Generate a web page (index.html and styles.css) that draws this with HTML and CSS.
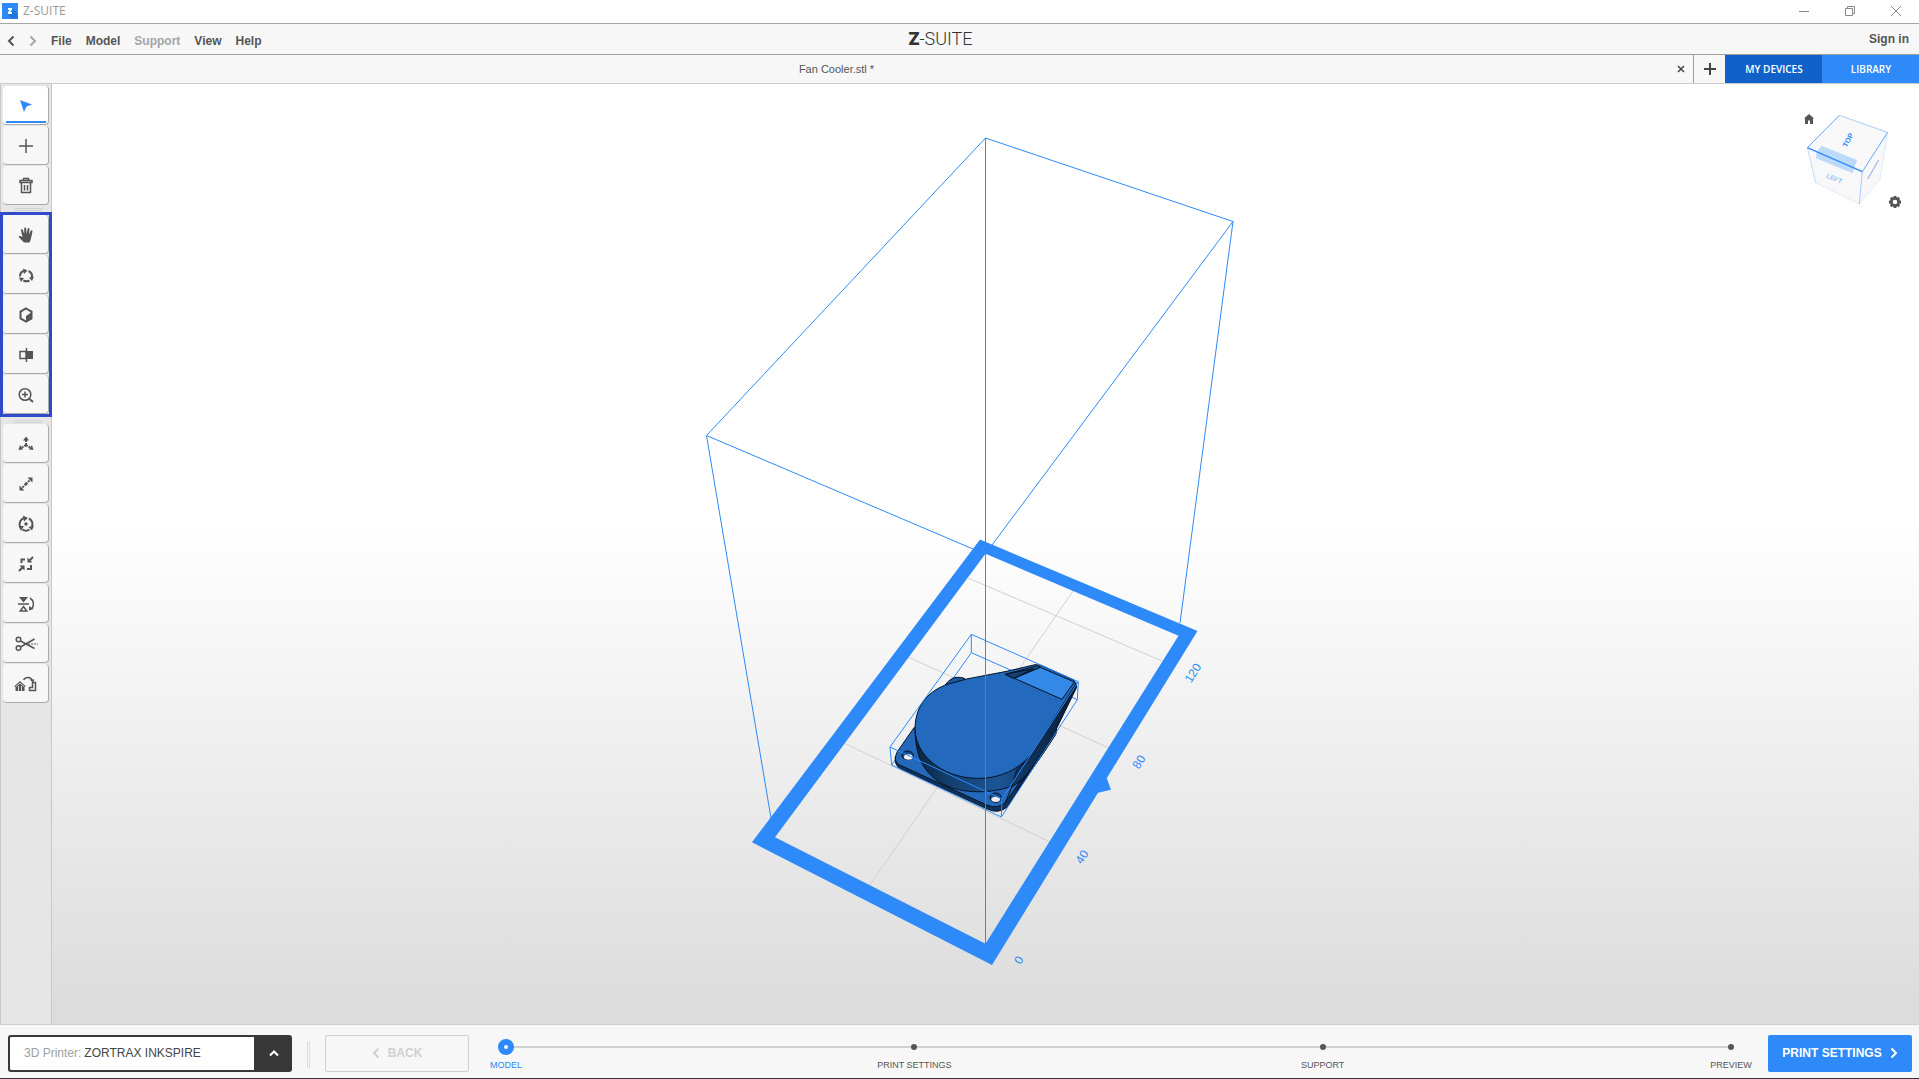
FILE: index.html
```html
<!DOCTYPE html>
<html lang="en">
<head>
<meta charset="utf-8">
<meta name="viewport" content="width=device-width, initial-scale=1">
<title>Z-SUITE</title>
<link rel="stylesheet" href="styles.css">
</head>
<body>
<header class="titlebar">
  <svg class="app-icon" viewBox="0 0 16 16" aria-hidden="true"><rect width="16" height="16" fill="#2d8af8"/><path d="M10 5l6 6v5H9l-3-5z" fill="#2276dc"/><path d="M6 5h4v2L8 9h2v2H6V9l2-2H6z" fill="#fff"/></svg>
  <span class="app-name">Z-SUITE</span>
  <div class="window-controls">
    <button aria-label="Minimize"><svg viewBox="0 0 12 12"><path d="M1 6.500h10"/></svg></button>
    <button aria-label="Restore"><svg viewBox="0 0 12 12"><path d="M1.500 3.500h7v7h-7zM3.500 3.500v-2h7v7h-2"/></svg></button>
    <button aria-label="Close"><svg viewBox="0 0 12 12"><path d="M1 1l10 10M11 1L1 11"/></svg></button>
  </div>
</header>

<nav class="menubar">
  <div class="menu-left">
    <button class="history" aria-label="Undo"><svg viewBox="0 0 8 12"><path d="M6.500 1.500L2 6l4.500 4.500"/></svg></button>
    <button class="history" aria-label="Redo" disabled><svg viewBox="0 0 8 12"><path d="M1.500 1.500L6 6l-4.500 4.500"/></svg></button>
    <div class="menus">
      <button>File</button>
      <button>Model</button>
      <button disabled>Support</button>
      <button>View</button>
      <button>Help</button>
    </div>
  </div>
  <div class="brand"><b>Z</b>-SUITE</div>
  <a class="sign-in" href="#">Sign in</a>
</nav>

<div class="tabs">
  <div class="tab"><span class="tab-name">Fan Cooler.stl *</span><button class="tab-close" aria-label="Close tab"><svg viewBox="0 0 8 8"><path d="M1 1l6 6M7 1L1 7"/></svg></button></div>
  <button class="tab-add" aria-label="New tab"><svg viewBox="0 0 12 12"><path d="M6 0v12M0 6h12"/></svg></button>
  <button class="devices">MY DEVICES</button>
  <button class="library">LIBRARY</button>
</div>

<main class="workspace">
  <aside class="toolbar">
    <div class="tools">
      <button class="active" aria-label="Select"><svg viewBox="0 0 24 24"><path d="M6 6l12 4.500-5.500 2L10 18z" fill="currentColor"/></svg></button>
      <button aria-label="Add"><svg viewBox="0 0 24 24"><path class="line" d="M12 5v14M5 12h14"/></svg></button>
      <button aria-label="Delete"><svg viewBox="0 0 24 24"><path class="line" d="M9.500 6.500v-2h5v2M6 6.500h12v2H6zM7.500 9v9.500h9V9M10.500 11v5.500M13.500 11v5.500"/></svg></button>
    </div>
    <div class="grip"></div>
    <div class="tools highlighted">
      <button aria-label="Pan"><svg viewBox="0 0 24 24"><path fill="currentColor" d="M10 19.500L5.200 14.500c-.8-1-.2-1.800.9-1.500L8.500 14 7 7.500c-.3-1.500 1.500-1.800 1.900-.4L10.200 11V5.500c0-1.500 1.900-1.500 2 0L12.600 11l1-5c.3-1.400 2.100-1.100 1.900.3L15 11.500l1.600-3.500c.7-1.300 2.200-.6 1.800.7L17 15.500c-.5 2-1.500 4-1.500 4z"/></svg></button>
      <button aria-label="Rotate view"><svg viewBox="0 0 24 24"><g class="line heavy"><path d="M6 13.500c0-3 1.500-5 4-5.500M14.500 8c3 1.500 4 4 3.300 6.500M15.500 17.500c-2.500 1.300-4.500.8-6.200 0"/></g><path fill="currentColor" d="M9 5.500l4.500 2-3.500 3.500zM20 13.500l-2 4.500-3-3.500zM5 14.500l5 .5-3 4z"/></svg></button>
      <button aria-label="View mode"><svg viewBox="0 0 24 24"><path d="M12 5.500l5.500 3.200v6.600L12 18.500l-5.500-3.200V8.700z" fill="none" stroke="currentColor" stroke-width="2"/><path fill="currentColor" d="M18 9v7l-6 3v-6z"/></svg></button>
      <button aria-label="Section"><svg viewBox="0 0 24 24"><path class="line" d="M12.500 5v14M6 8.500h6v7H6z"/><path fill="currentColor" d="M12 8h7v8h-7z"/></svg></button>
      <button aria-label="Zoom"><svg viewBox="0 0 24 24"><circle class="line" cx="11" cy="11.500" r="5.800"/><path class="line" d="M11 8.500v6M8 11.500h6"/><path class="line heavy" d="M15.500 16l3.500 3"/></svg></button>
    </div>
    <div class="grip"></div>
    <div class="tools">
      <button aria-label="Move"><svg viewBox="0 0 24 24"><path class="line dashes" d="M12 13V7M12 13l-5 3M12 13l5 3"/><path fill="currentColor" d="M12 4.500l3 4H9zM4.500 18l1.500-5 3 4.500zM19.500 18L18 13l-3 4.500z"/><circle cx="12" cy="13" r="1.500" fill="currentColor"/></svg></button>
      <button aria-label="Scale"><svg viewBox="0 0 24 24"><path class="line dashes" d="M12 12l5-5M12 12l-5 5"/><path fill="currentColor" d="M18.500 5.500v5l-5-5zM5.500 18.500v-5l5 5z"/><circle cx="12" cy="12" r="1.400" fill="currentColor"/></svg></button>
      <button aria-label="Rotate"><svg viewBox="0 0 24 24"><path class="line heavy" d="M6 14a6.300 6.300 0 0 1 4-8M15 6.500a6.300 6.300 0 0 1 3 8M15.500 17.500a6.300 6.300 0 0 1-7 0"/><path fill="currentColor" d="M9 3.500l5 2.500-4 3.500zM20 13.500L18 18.500l-3.500-3.500zM4.500 14h5.500l-3 5z"/><circle cx="12" cy="12" r="1.700" fill="currentColor"/></svg></button>
      <button aria-label="Fit"><svg viewBox="0 0 24 24"><path class="line heavy" d="M7.500 11V7.500H11M17 13v4h-4M19 5l-4 4M5 19l4-4"/><path fill="currentColor" d="M13.500 5.500v5h5zM10.500 18.500v-5h-5z"/></svg></button>
      <button aria-label="Mirror"><svg viewBox="0 0 24 24"><path fill="currentColor" d="M5 5h9l-4.500 5.500z"/><path class="line" d="M4 12h11M9.500 14.500l3.300 4.500H6.200zM16 6c4 2.500 4.500 8 1.500 11"/><path fill="currentColor" d="M15 18.500v-4.500l4.500 3z"/></svg></button>
      <button aria-label="Cut"><svg viewBox="0 0 24 24"><circle class="line" cx="4.500" cy="7.500" r="2.300"/><circle class="line" cx="4.500" cy="16" r="2.300"/><path class="line" d="M6.500 9l14 7.500M6.500 15l14-8"/><path d="M14 12h10" stroke="currentColor" stroke-dasharray="2 1"/></svg></button>
      <button aria-label="Replace"><svg viewBox="0 0 24 24"><path fill="currentColor" d="M6 9l6 5.500h-1.500V19h-9v-4.500H0z"/><path d="M4.500 19v-5M7.500 19v-5M2 14.500l4-3.500 4 3.500" fill="none" stroke="#f7f7f7" stroke-width=".8"/><path class="line" d="M9.500 8c2-3.500 7-3.500 8.500 0M21.500 10.500v8h-6v-3h3v-5z"/><path fill="currentColor" d="M15.500 7.500h5l-1.500 3z"/></svg></button>
    </div>
  </aside>

  <section class="viewport" aria-label="Build platform">
    <svg class="scene" viewBox="52 84 1867 940" preserveAspectRatio="xMidYMid meet">
      <defs>
        <linearGradient id="side" x1="0" x2="1"><stop offset="0" stop-color="#0b2440"/><stop offset=".25" stop-color="#14406f"/><stop offset=".6" stop-color="#1c5596"/><stop offset="1" stop-color="#0c2747"/></linearGradient>
        <linearGradient id="flank" x1="0" y1="1" x2="1" y2="0"><stop offset="0" stop-color="#123a68"/><stop offset="1" stop-color="#091b30"/></linearGradient>
      </defs>
      <path class="grid-line" d="M968 578L1162 661M908 657L1109 748M844 743L1050 842M1073 591L870 885"/>
      <path class="platform" fill-rule="evenodd" d="M980 539.500L1197.500 631L1106.700 778.300L1111 789.700L1098 792.700L992 965L752 842.300ZM985.500 553.700L775 837.300L985.500 943.700L1178.500 635.700Z"/>
      <path class="wire" d="M985.500 138L1233 221.500L1180 623M1233 221.500L992 545M985.500 138L706.500 435.500L771 818M706.500 435.500L973 549"/>
      <g class="model" transform="translate(860 600) scale(.33333)">
        <path class="box-wire" d="M334 158L652 299M334 158L95 495M334 103V158"/>
        <path class="edge" fill="#1b58a0" d="M255 255Q275 230 292 232Q315 232 318 240L290 262z"/>
        <path class="edge" fill="#0f325a" d="M106 470Q103 495 120 506L382 627Q415 643 440 622L588 400L590 370z"/>
        <path class="edge" fill="#2468bb" d="M162 383L112 455Q98 482 117 494L380 615Q415 629 437 606L590 388L480 350z"/>
        <path class="edge" fill="url(#side)" d="M165 385C166 470 190 520 250 553C310 583 395 580 450 560C500 540 520 500 588 388L560 350z"/>
        <path class="edge" fill="url(#flank)" d="M648 248L650 262L590 385L588 400C560 445 545 470 520 500Q490 540 455 562L470 510L510 472z"/>
        <path class="edge" fill="#2369bd" d="M165 385C166 310 213 270 262 253L320 237L440 214L525 194Q540 193 555 201L641 240Q650 247 645 256L515 462C466 519 405 537 345 535C245 531 165 465 165 385z"/>
        <path class="edge" fill="#1b58a0" d="M435 223L532 197L541 201L462 235z"/>
        <path class="edge" fill="#163f72" d="M435 223L520 206L462 235z"/>
        <path class="edge" fill="#3388e8" d="M541 202L643 246L606 298L463 235z"/>
        <path class="edge" fill="none" d="M437 606L455 562M470 570L586 400M445 615L586 405"/>
        <g><ellipse class="edge" cx="143" cy="466" rx="17" ry="13" fill="#174b87"/><ellipse cx="145" cy="471" rx="13" ry="8" fill="#f1f1f1"/></g>
        <g><ellipse class="edge" cx="407" cy="593" rx="17" ry="14" fill="#174b87"/><ellipse cx="407" cy="598" rx="13" ry="8" fill="#eee"/></g>
        <path class="box-wire" d="M334 103L655 245L652 299L424 651L95 495L90 441L334 103M90 441L426 597L655 245M426 597L424 651"/>
      </g>
      <path class="wire" d="M985.500 138V944"/>
      <g class="ruler">
        <text transform="translate(1193 673) rotate(-58)">120</text>
        <text transform="translate(1139 762) rotate(-58)">80</text>
        <text transform="translate(1082 857) rotate(-58)">40</text>
        <text transform="translate(1019 960) rotate(-58)">0</text>
      </g>
    </svg>
    <div class="view-cube">
      <svg class="cube" viewBox="0 0 330 330" aria-label="View cube">
        <path fill="#f8f8f9" d="M118 31L263 82L240 222L178 297L47 233L22 128z"/>
        <path fill="#bcdafc" d="M64 122L171 165L158 205L48 160L50 142z"/>
        <g fill="none" stroke="#2d8af8" stroke-width="3"><path opacity=".75" d="M118 31L22 128M263 82L187 200"/><path opacity=".4" d="M118 31L263 82M187 200L178 297"/><path stroke-width="4" d="M22 128L187 200"/><path opacity=".3" d="M22 128L47 233"/><path opacity=".15" d="M263 82L240 222L178 297L47 233"/></g>
        <path d="M203 222L236 165" stroke="#a3bee0" stroke-width="4"/>
        <text class="cube-top" transform="translate(144 105) rotate(-62)">TOP</text>
        <text class="cube-left" transform="translate(103 220) rotate(22)">LEFT</text>
      </svg>
      <button class="home" aria-label="Home view"><svg viewBox="0 0 12 12"><path fill="#555" d="M6 1l5 4.500h-1V11H7V7.500H5V11H2V5.500H1z"/></svg></button>
      <button class="gear" aria-label="View settings"><svg viewBox="0 0 14 14"><circle cx="7" cy="7" r="3.600" fill="none" stroke="#555" stroke-width="2.600"/><path stroke="#555" stroke-width="2.800" d="M7 1v2M7 11v2M1 7h2M11 7h2M2.800 2.800l1.400 1.400M9.800 9.800l1.400 1.400M11.200 2.800L9.800 4.200M4.200 9.800l-1.400 1.400"/></svg></button>
    </div>
  </section>
</main>

<footer class="statusbar">
  <div class="printer">
    <label for="printer">3D Printer:</label>
    <select id="printer"><option>ZORTRAX INKSPIRE</option></select>
    <svg viewBox="0 0 12 12" aria-hidden="true"><path d="M2 8.500l4-4 4 4"/></svg>
  </div>
  <div class="divider"></div>
  <button class="back" disabled><svg viewBox="0 0 8 12"><path d="M6.500 1.500L2 6l4.500 4.500"/></svg>BACK</button>
  <ol class="steps">
    <li class="current"><span class="dot"></span><span class="step-name">MODEL</span></li>
    <li><span class="dot"></span><span class="step-name">PRINT SETTINGS</span></li>
    <li><span class="dot"></span><span class="step-name">SUPPORT</span></li>
    <li><span class="dot"></span><span class="step-name">PREVIEW</span></li>
  </ol>
  <button class="next">PRINT SETTINGS<svg viewBox="0 0 8 12"><path d="M1.500 1.500L6 6l-4.500 4.500"/></svg></button>
</footer>
</body>
</html>
```
FILE: styles.css
```css
:root {
  --blue: #2d8af8;
  --ink: #555;
  --panel: #f7f7f7;
}

* { box-sizing: border-box; }

body {
  margin: 0;
  min-height: 100vh;
  display: flex;
  flex-direction: column;
  background: var(--panel);
  color: var(--ink);
  font: 12px/16px "Liberation Sans", Arial, sans-serif;
}

button, select {
  margin: 0;
  padding: 0;
  border: 0;
  background: none;
  color: inherit;
  font: inherit;
}

svg { display: block; }

/* Window title */
.titlebar {
  display: flex;
  align-items: center;
  height: 24px;
  padding: 0 0 2px 2px;
  background: #fff;
  border-bottom: 1px solid #a5a5a5;
}
.app-icon { width: 16px; height: 16px; }
.app-name {
  margin-left: 5px;
  color: #999;
  font-family: "Open Sans", "Noto Sans", sans-serif;
}
.window-controls { display: flex; margin-left: auto; }
.window-controls button { width: 46px; height: 20px; display: grid; place-items: center; }
.window-controls svg { width: 12px; height: 12px; fill: none; stroke: #888; }

/* Menus */
.menubar {
  display: grid;
  grid-template-columns: 1fr auto 1fr;
  align-items: center;
  height: 31px;
  padding-top: 3px;
  border-bottom: 1px solid #a0a0a0;
  font-weight: bold;
}
.menu-left { display: flex; align-items: center; padding-left: 7px; }
.menus { display: flex; gap: 14px; margin-left: 14px; }
.menubar button:disabled { color: #a5a5a5; }
.history + .history { margin-left: 14px; }
.history svg { width: 8px; height: 12px; fill: none; stroke: currentColor; stroke-width: 2; }
.brand {
  padding: 0 38px 3px 0;
  color: #333;
  font: 300 18px/22px Roboto, sans-serif;
}
.brand b { font-weight: 900; }
.sign-in {
  justify-self: end;
  padding: 0 10px 4px 0;
  color: inherit;
  text-decoration: none;
}

/* Document tabs */
.tabs {
  display: flex;
  height: 29px;
  border-bottom: 1px solid #ccc;
}
.tab { flex: 1; display: flex; align-items: center; padding-right: 2px; }
.tab-name { flex: 1; text-align: center; font-size: 11px; padding-left: 2px; }
.tab-close { width: 20px; height: 20px; display: grid; place-items: center; }
.tab-close svg { width: 8px; height: 8px; stroke: #444; stroke-width: 1.5; }
.tab-add {
  width: 32px;
  display: grid;
  place-items: center;
  border-left: 1px solid #a0a0a0;
}
.tab-add svg { width: 12px; height: 12px; stroke: #444; stroke-width: 2; }
.devices, .library {
  width: 97px;
  padding-left: 1px;
  color: #fff;
  font: 600 10px/16px "Open Sans", "Noto Sans", sans-serif;
}
.devices { background: #1062c8; }
.library { background: var(--blue); }

.workspace { flex: 1; display: flex; }

/* Tool column */
.toolbar {
  width: 52px;
  padding-top: 2px;
  background: #e6e6e6;
  border: solid #c8c8c8;
  border-width: 0 1px;
}
.tools { display: grid; gap: 1px; padding: 0 2px; }
.tools.highlighted { margin: 0 -1px; padding: 0; border: 3px solid #2f4bc9; }
.tools button {
  height: 39px;
  padding-top: 1px;
  display: grid;
  place-items: center;
  background: var(--panel);
  border: solid #aaa;
  border-width: 0 1px 1px 0;
  border-radius: 4px;
}
.tools svg { width: 24px; height: 24px; }
.tools .active { color: var(--blue); background: linear-gradient(var(--blue), var(--blue)) center 35px / 40px 2px no-repeat #fff; }
.line { fill: none; stroke: currentColor; stroke-width: 1.5; }
.heavy { stroke-width: 2; }
.dashes { stroke-dasharray: 2 1; stroke-width: 2; }
.grip {
  height: 3px;
  margin: 3px 9px 1px 14px;
  border: solid #d0d0d0;
  border-width: 1px 0;
}

/* 3D view */
.viewport {
  flex: 1;
  display: flex;
  position: relative;
  background: linear-gradient(#fff 47%, #dcdcdc 98%);
}
.scene { width: 100%; height: 100%; }
.grid-line { fill: none; stroke: #d0d0d0; }
.platform { fill: var(--blue); }
.wire { fill: none; stroke: var(--blue); }
.box-wire { fill: none; stroke: var(--blue); stroke-width: 3; }
.edge { stroke: #061322; stroke-width: 3; stroke-linejoin: round; }
.ruler text {
  fill: var(--blue);
  font-size: 12px;
  text-anchor: middle;
  dominant-baseline: central;
}
.view-cube { position: absolute; top: 21px; right: 9px; }
.cube { width: 110px; height: 110px; }
.cube text {
  fill: var(--blue);
  font-weight: bold;
  text-anchor: middle;
  dominant-baseline: central;
}
.cube .cube-top { font-size: 22px; }
.cube .cube-left { font-size: 20px; opacity: .5; }
.home { position: absolute; left: 3px; top: 8px; }
.home svg { width: 12px; height: 12px; }
.gear { position: absolute; left: 88px; top: 90px; }
.gear svg { width: 14px; height: 14px; }

/* Bottom bar */
.statusbar {
  display: flex;
  align-items: flex-start;
  gap: 15px;
  padding: 10px 7px 6px 8px;
  border: solid #d0d0d0;
  border-width: 1px 0;
  border-bottom-color: #333;
}
.printer {
  display: flex;
  align-items: center;
  gap: 3px;
  width: 284px;
  height: 37px;
  padding: 0 2px 1px 14px;
  border: 2px solid #383838;
  border-right-width: 0;
  border-radius: 3px;
  background: linear-gradient(90deg, #fff 244px, #383838 244px);
}
.printer label { color: #a0a0a0; }
.printer select { flex: 1; height: 32px; appearance: none; color: #444; }
.printer svg {
  width: 12px;
  height: 12px;
  margin-right: 10px;
  fill: none;
  stroke: #fff;
  stroke-width: 2;
}
.divider {
  width: 3px;
  height: 27px;
  margin-top: 6px;
  border: solid #ddd;
  border-width: 0 1px;
}
.back, .next {
  display: flex;
  align-items: center;
  justify-content: center;
  gap: 8px;
  width: 144px;
  height: 37px;
  padding-bottom: 1px;
  border-radius: 2px;
  font-weight: bold;
}
.back { color: #d0d0d0; border: 1px solid #d0d0d0; }
.next { color: #fff; background: var(--blue); }
.back svg, .next svg { width: 8px; height: 12px; fill: none; stroke: currentColor; stroke-width: 2; }
.steps {
  flex: 1;
  display: flex;
  justify-content: space-between;
  margin: 0 1px;
  padding: 0;
  list-style: none;
  background: linear-gradient(#d0d0d0, #d0d0d0) center 11px / calc(100% - 42px) 2px no-repeat;
}
.steps li {
  display: flex;
  flex-direction: column;
  align-items: center;
  width: 42px;
  height: 37px;
  font-size: 9px;
  line-height: 12px;
  white-space: nowrap;
}
.dot {
  width: 6px;
  height: 6px;
  margin: 9px 0;
  border-radius: 50%;
  background: var(--ink);
}
.current { color: var(--blue); }
.current .dot {
  width: 16px;
  height: 16px;
  margin: 4px 0;
  border: 6px solid var(--blue);
  background: #fff;
}
```
